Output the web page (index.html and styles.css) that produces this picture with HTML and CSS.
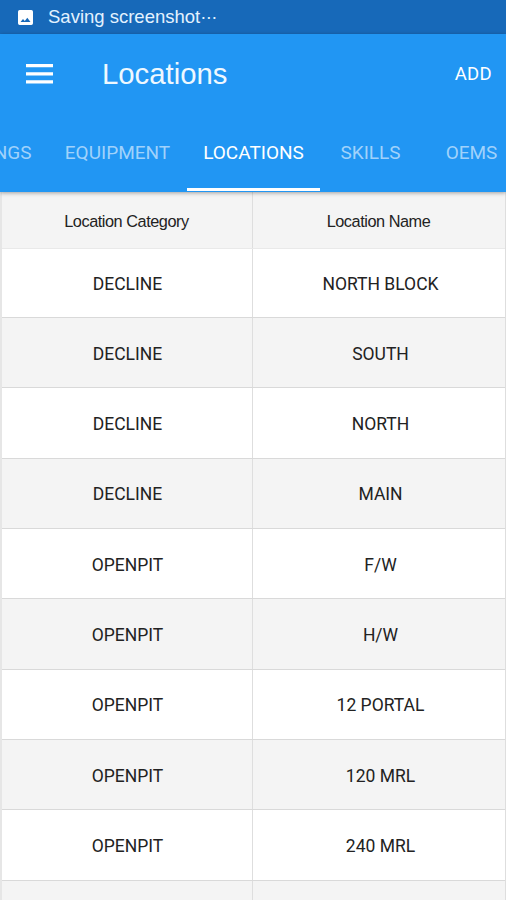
FILE: index.html
```html
<!DOCTYPE html>
<html lang="en">
<head>
<meta charset="utf-8">
<meta name="viewport" content="width=device-width, initial-scale=1">
<title>Locations</title>
<link rel="stylesheet" href="styles.css">
</head>
<body>
<div class="status-bar">
  <svg class="status-icon" viewBox="0 0 15 15" aria-hidden="true"><path fill-rule="evenodd" d="M1.7 0h11.6Q15 0 15 1.7v11.6Q15 15 13.300 15H1.700Q0 15 0 13.300V1.700Q0 0 1.700 0ZM2.500 12h10L9.300 7.800 6.800 10.900 5 8.900Z"/></svg>
  <span class="status-text">Saving screenshot<span class="dots">···</span></span>
</div>
<header class="app-header">
  <div class="toolbar">
    <svg class="menu-icon" viewBox="0 0 27 20" aria-hidden="true"><path d="M0 0h27v3.300H0zM0 8.200h27v3.300H0zM0 16.200h27v3.300H0z"/></svg>
    <h1 class="title">Locations</h1>
    <span class="add">ADD</span>
  </div>
  <nav class="tabs">
    <span class="tab tab-settings">SETTINGS</span>
    <span class="tab tab-equipment">EQUIPMENT</span>
    <span class="tab tab-locations active">LOCATIONS</span>
    <span class="tab tab-skills">SKILLS</span>
    <span class="tab tab-oems">OEMS</span>
  </nav>
</header>
<main class="grid">
  <div class="row head"><span>Location Category</span><span>Location Name</span></div>
  <div class="row first"><span>DECLINE</span><span>NORTH BLOCK</span></div>
  <div class="row"><span>DECLINE</span><span>SOUTH</span></div>
  <div class="row"><span>DECLINE</span><span>NORTH</span></div>
  <div class="row"><span>DECLINE</span><span>MAIN</span></div>
  <div class="row"><span>OPENPIT</span><span>F/W</span></div>
  <div class="row"><span>OPENPIT</span><span>H/W</span></div>
  <div class="row"><span>OPENPIT</span><span>12 PORTAL</span></div>
  <div class="row"><span>OPENPIT</span><span>120 MRL</span></div>
  <div class="row"><span>OPENPIT</span><span>240 MRL</span></div>
  <div class="row"><span></span><span></span></div>
</main>
</body>
</html>
```
FILE: styles.css
```css
* { box-sizing: border-box; }
body {
  margin: 0;
  height: 900px;
  overflow: hidden;
  display: flex;
  flex-direction: column;
  background: #fff;
  font-family: Roboto, "Liberation Sans", sans-serif;
}
.status-bar {
  flex: none;
  height: 34px;
  padding-left: 18px;
  display: flex;
  align-items: center;
  gap: 15px;
  background: #1769b9;
  color: #e3f2ff;
}
.status-icon { width: 15px; height: 15px; fill: #fff; }
.status-text {
  font-family: "Liberation Sans", sans-serif;
  font-size: 18.500px;
  line-height: 36px;
  white-space: nowrap;
}
.dots { letter-spacing: -.6px; }
.app-header {
  flex: none;
  height: 158px;
  background: #2196f3;
  color: #fff;
  box-shadow: 0 1px 4px rgba(0, 0, 0, .35);
  position: relative;
  overflow-x: clip;
}
.toolbar {
  height: 79px;
  padding: 0 14px 0 26px;
  display: flex;
  align-items: center;
}
.menu-icon { width: 27px; height: 20px; fill: #fff; }
.title {
  margin: 0 auto 0 49px;
  font-family: "Liberation Sans", sans-serif;
  font-size: 29.300px;
  font-weight: 400;
  line-height: 79px;
  color: #eef8ff;
}
.add { font-size: 18.500px; letter-spacing: .3px; }
.tabs { display: flex; height: 78px; margin-left: -76px; }
.tab {
  flex: none;
  height: 78px;
  line-height: 79px;
  text-align: center;
  font-size: 19px;
  color: #a0d2fb;
}
.tab-settings { width: 124px; padding-left: 3px; }
.tab-equipment { width: 139px; }
.tab-locations { width: 133px; }
.tab-skills, .tab-oems { width: 101px; }
.tab.active { color: #fff; border-bottom: 3px solid #fff; }
.grid {
  flex: 1;
  min-height: 0;
  overflow: hidden;
  border-left: 2px solid #e6e6e6;
  border-right: 1px solid #dedede;
}
.row {
  height: 70.330px;
  display: grid;
  grid-template-columns: 251px 1fr;
  align-items: stretch;
  border-bottom: 1px solid #d9d9d9;
  background: #fff;
  font-size: 17.500px;
  color: #222;
}
.row span {
  display: flex;
  align-items: center;
  justify-content: center;
  padding: 2px 0 0 1px;
}
.row span:first-child { border-right: 1px solid #dedede; }
.row span:last-child { padding-left: 3px; }
.row:nth-child(odd) { background: #f4f4f4; }
.row.head {
  height: 57px;
  font-family: "Liberation Sans", sans-serif;
  font-size: 16.300px;
  letter-spacing: -.45px;
  border-color: #e9e9e9;
}
.row.head span { padding: 3px 1px 0 0; }
.row.first { height: 69px; }
```
